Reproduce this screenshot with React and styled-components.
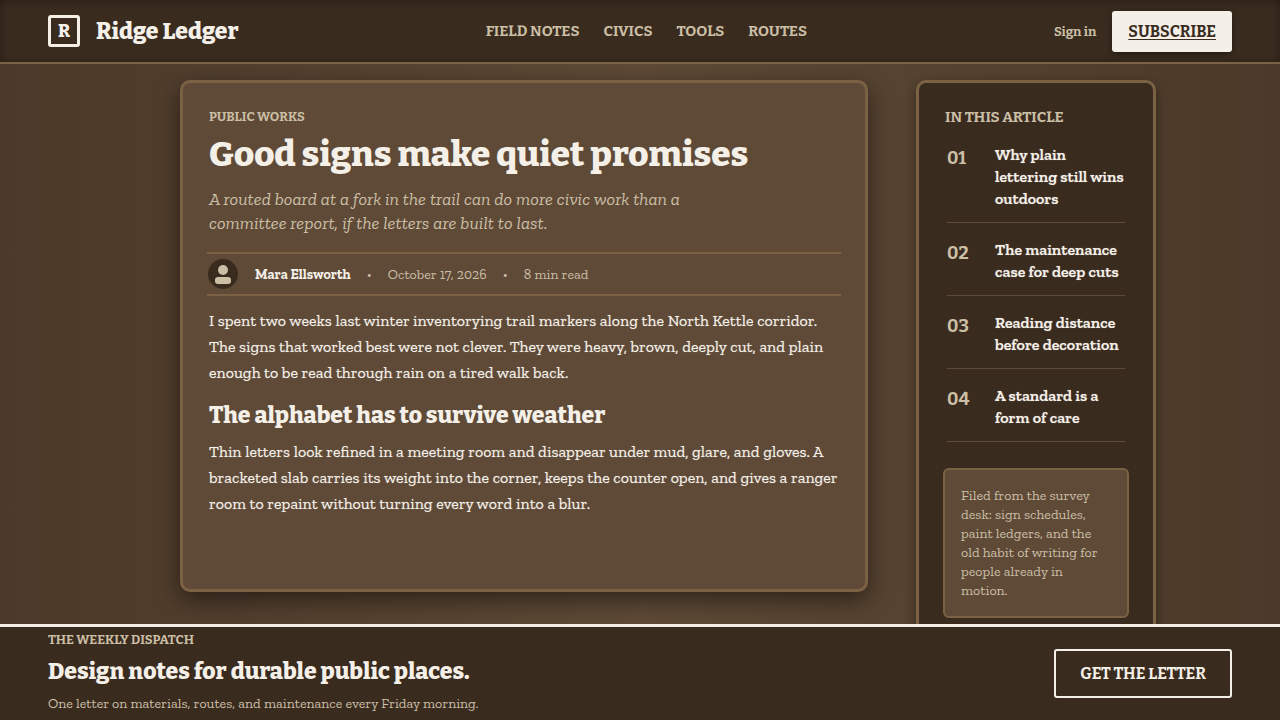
import React from "react";
import styled, { createGlobalStyle, css } from "styled-components";

const slab = `"Roboto Slab", Bitter, "DejaVu Serif Condensed", serif`;
const text = `"Zilla Slab", "DejaVu Serif Condensed", "DejaVu Serif", serif`;

const GlobalStyle = createGlobalStyle`
  * {
    box-sizing: border-box;
  }

  body {
    margin: 0;
    background: #4b3929;
    color: #f4f0e8;
    font-family: ${text};
  }

  h1, h2, p, ol {
    margin: 0;
    padding: 0;
  }

  h1, h2 {
    font-family: ${slab};
    font-weight: 800;
  }

  a {
    color: inherit;
    text-decoration: none;
  }
`;

const Page = styled.div`
  display: flex;
  flex-direction: column;
  height: 100vh;
  background: linear-gradient(90deg, #4b3929 0%, #5e4a36 50%, #4b3929 100%);
`;

const Header = styled.header`
  display: flex;
  align-items: center;
  justify-content: space-between;
  flex: none;
  height: 64px;
  padding: 0 48px;
  background: #3a2b1f;
  border-bottom: 2px solid #7c6244;
  box-shadow: inset 0 1px 8px rgba(0, 0, 0, 0.35);
`;

const Brand = styled.a`
  display: flex;
  align-items: center;
  gap: 16px;
  font-family: ${slab};
  font-size: 23px;
  font-weight: 800;
`;

const BrandMark = styled.span`
  display: grid;
  place-items: center;
  width: 32px;
  height: 32px;
  border: 3px solid #f4f0e8;
  border-radius: 3px;
  font-size: 18px;
  line-height: 20px;
`;

const Nav = styled.nav`
  display: flex;
  gap: 24px;
  color: #cbbfa6;
  font-family: ${slab};
  font-size: 15px;
  font-weight: 700;
  text-transform: uppercase;
`;

const Actions = styled.div`
  display: flex;
  align-items: center;
  gap: 16px;
`;

const SignIn = styled.a`
  color: #cbbfa6;
  font-family: ${slab};
  font-size: 13px;
  font-weight: 700;
`;

const Button = styled.button`
  font-family: ${slab};
  font-size: 16px;
  font-weight: 700;
  text-transform: uppercase;
  border-radius: 3px;
  cursor: pointer;

  ${(props) =>
    props.$solid
      ? css`
          height: 41px;
          padding: 0 16px;
          border: 0;
          background: #f4f0e8;
          color: #3a2b1f;
          text-decoration: underline;
          text-underline-offset: 2px;
          box-shadow: 0 2px 6px rgba(0, 0, 0, 0.4);
        `
      : css`
          height: 49px;
          padding: 0 24px;
          border: 2px solid #f4f0e8;
          background: transparent;
          color: #f4f0e8;
        `}
`;

const Main = styled.main`
  display: grid;
  grid-template-columns: minmax(0, 1fr) 240px;
  grid-template-rows: minmax(0, 1fr);
  gap: 48px;
  flex: 1;
  min-height: 0;
  padding: 16px 124px 32px 180px;
  overflow: hidden;
`;

const Panel = styled.div`
  padding: 24px;
  border: 3px solid #7c6244;
  border-radius: 10px;
  box-shadow: 0 8px 24px rgba(0, 0, 0, 0.5);
`;

const Article = styled(Panel).attrs({ as: "article" })`
  background: #5e4a37;
`;

const Sidebar = styled(Panel).attrs({ as: "aside" })`
  align-self: start;
  background: #3a2b1f;
  box-shadow: 0 4px 12px rgba(0, 0, 0, 0.4);
`;

const Kicker = styled.p`
  color: #cbbfa6;
  font-family: ${slab};
  font-size: 13px;
  font-weight: 700;
  line-height: 20px;
  text-transform: uppercase;
`;

const Copy = styled.div`
  padding: 0 2px;
`;

const Title = styled.h1`
  margin-top: 4px;
  font-size: 35px;
  line-height: 46px;
`;

const Dek = styled.p`
  margin: 10px 0 17px;
  color: #cbbfa6;
  font-size: 18px;
  font-style: italic;
  line-height: 24px;
`;

const Byline = styled.div`
  display: flex;
  align-items: center;
  gap: 16px;
  height: 44px;
  margin-bottom: 12px;
  border: solid #7c6244;
  border-width: 2px 0;
  color: #cbbfa6;
  font-size: 14px;
`;

const Author = styled.strong`
  color: #f4f0e8;
`;

const Paragraph = styled.p`
  font-size: 16px;
  line-height: 26px;
  text-shadow: 0 0 1px rgba(244, 240, 232, 0.5);
  white-space: nowrap;
`;

const Subhead = styled.h2`
  margin: 12px 0 7px;
  font-size: 23px;
  line-height: 34px;
`;

const SidebarTitle = styled.h2`
  padding: 0 2px;
  color: #cbbfa6;
  font-size: 15px;
  font-weight: 700;
  line-height: 21px;
  text-transform: uppercase;
`;

const Contents = styled.ol`
  padding: 0 4px;
  list-style: none;
`;

const ContentsItem = styled.li`
  border-bottom: 1px solid #5e4a37;
`;

const ContentsLink = styled.a`
  display: flex;
  padding: 16px 0 12px;
  font-size: 16px;
  font-weight: 600;
  line-height: 22px;
  text-shadow: 0 0 1px rgba(244, 240, 232, 0.5);
  white-space: nowrap;
`;

const Number = styled.span`
  flex: 0 0 48px;
  color: #cbbfa6;
  font-family: ${slab};
  font-size: 18px;
  font-weight: 700;
  line-height: 28px;
  text-shadow: none;
`;

const Note = styled.p`
  margin-top: 26px;
  padding: 16px;
  border: 2px solid #7c6244;
  border-radius: 6px;
  background: #5e4a37;
  color: #cbbfa6;
  font-size: 14px;
  line-height: 19px;
  white-space: nowrap;
`;

const Dispatch = styled.footer`
  display: flex;
  align-items: center;
  justify-content: space-between;
  flex: none;
  height: 96px;
  padding: 0 48px;
  background: #3a2b1f;
  border-top: 3px solid #f4f0e8;
`;

const DispatchCopy = styled.div`
  padding-bottom: 3px;
`;

const DispatchTitle = styled.h2`
  margin: 4px 0 6px;
  font-size: 23px;
  line-height: 34px;
`;

const DispatchText = styled.p`
  color: #cbbfa6;
  font-size: 14px;
  line-height: 20px;
`;

const navLinks = ["Field notes", "Civics", "Tools", "Routes"];

const intro = [
  "I spent two weeks last winter inventorying trail markers along the North Kettle corridor.",
  "The signs that worked best were not clever. They were heavy, brown, deeply cut, and plain",
  "enough to be read through rain on a tired walk back.",
];

const weather = [
  "Thin letters look refined in a meeting room and disappear under mud, glare, and gloves. A",
  "bracketed slab carries its weight into the corner, keeps the counter open, and gives a ranger",
  "room to repaint without turning every word into a blur.",
];

const contents = [
  ["Why plain", "lettering still wins", "outdoors"],
  ["The maintenance", "case for deep cuts"],
  ["Reading distance", "before decoration"],
  ["A standard is a", "form of care"],
];

const note = [
  "Filed from the survey",
  "desk: sign schedules,",
  "paint ledgers, and the",
  "old habit of writing for",
  "people already in",
  "motion.",
];

function Lines({ lines }) {
  return lines.map((line, i) => (
    <React.Fragment key={line}>
      {i > 0 && <br />}
      {line}
    </React.Fragment>
  ));
}

function Avatar() {
  return (
    <svg width="32" height="30" viewBox="0 0 32 30" aria-hidden="true">
      <circle cx="16" cy="15" r="15" fill="#3a2b1f" />
      <circle cx="16" cy="11" r="5" fill="#cbbfa6" />
      <rect x="8" y="18" width="16" height="7" rx="3" fill="#cbbfa6" />
    </svg>
  );
}

export default function App() {
  return (
    <Page>
      <GlobalStyle />
      <Header>
        <Brand href="#">
          <BrandMark>R</BrandMark>
          Ridge Ledger
        </Brand>
        <Nav>
          {navLinks.map((label) => (
            <a key={label} href="#">{label}</a>
          ))}
        </Nav>
        <Actions>
          <SignIn href="#">Sign in</SignIn>
          <Button $solid>Subscribe</Button>
        </Actions>
      </Header>

      <Main>
        <Article>
          <Copy>
            <Kicker>Public works</Kicker>
            <Title>Good signs make quiet promises</Title>
            <Dek>
              <Lines
                lines={[
                  "A routed board at a fork in the trail can do more civic work than a",
                  "committee report, if the letters are built to last.",
                ]}
              />
            </Dek>
          </Copy>
          <Byline>
            <Avatar />
            <Author>Mara Ellsworth</Author>
            <span>•</span>
            <span>October 17, 2026</span>
            <span>•</span>
            <span>8 min read</span>
          </Byline>
          <Copy>
            <Paragraph><Lines lines={intro} /></Paragraph>
            <Subhead>The alphabet has to survive weather</Subhead>
            <Paragraph><Lines lines={weather} /></Paragraph>
          </Copy>
        </Article>

        <Sidebar>
          <SidebarTitle>In this article</SidebarTitle>
          <Contents>
            {contents.map((lines, i) => (
              <ContentsItem key={i}>
                <ContentsLink href="#">
                  <Number>0{i + 1}</Number>
                  <span><Lines lines={lines} /></span>
                </ContentsLink>
              </ContentsItem>
            ))}
          </Contents>
          <Note><Lines lines={note} /></Note>
        </Sidebar>
      </Main>

      <Dispatch>
        <DispatchCopy>
          <Kicker>The weekly dispatch</Kicker>
          <DispatchTitle>Design notes for durable public places.</DispatchTitle>
          <DispatchText>
            One letter on materials, routes, and maintenance every Friday morning.
          </DispatchText>
        </DispatchCopy>
        <Button>Get the letter</Button>
      </Dispatch>
    </Page>
  );
}
